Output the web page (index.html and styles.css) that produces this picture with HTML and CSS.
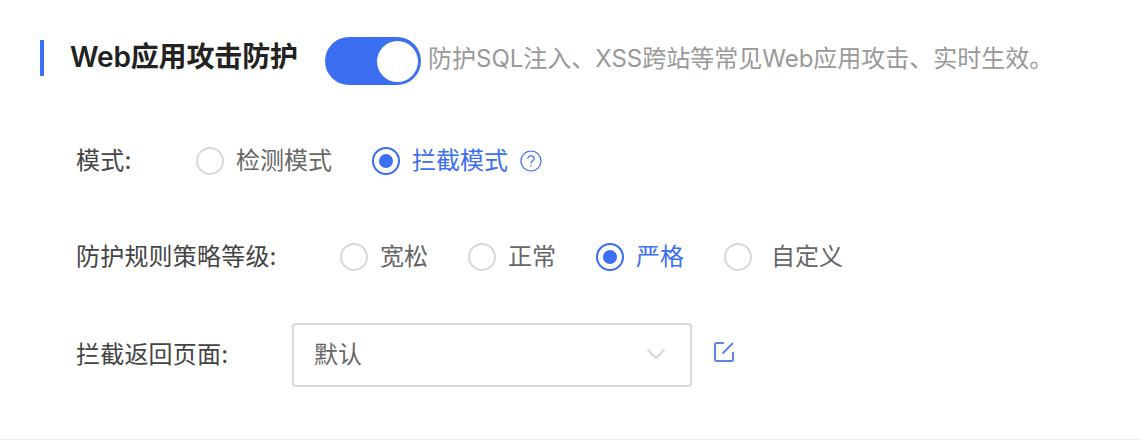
FILE: index.html
```html
<!DOCTYPE html>
<html lang="zh-CN">
<head>
<meta charset="utf-8">
<title>Web应用攻击防护</title>
<link rel="stylesheet" href="styles.css">
</head>
<body>
<section class="panel">
  <header class="head">
    <h2 class="title">Web应用攻击防护</h2>
    <span class="switch"><span class="knob"></span></span>
    <span class="desc">防护SQL注入、XSS跨站等常见Web应用攻击、实时生效。</span>
  </header>
  <div class="row row-mode">
    <span class="label label-mode">模式:</span>
    <span class="radio"><i class="dot"></i><span class="txt">检测模式</span></span>
    <span class="radio on"><i class="dot"></i><span class="txt">拦截模式</span></span>
    <svg class="help" width="22" height="22" viewBox="0 0 22 22" fill="none" stroke="#3b6ef0" stroke-width="1.2"><circle cx="11" cy="11" r="10"/><path d="M7.800 8.800c0-1.800 1.400-3 3.200-3s3.200 1.200 3.200 2.800c0 1.200-.7 1.800-1.700 2.500-1 .7-1.500 1.200-1.500 2.400"/><path d="M11 15v1.500"/></svg>
  </div>
  <div class="row row-level">
    <span class="label label-level">防护规则策略等级:</span>
    <span class="radio"><i class="dot"></i><span class="txt">宽松</span></span>
    <span class="radio"><i class="dot"></i><span class="txt">正常</span></span>
    <span class="radio on"><i class="dot"></i><span class="txt">严格</span></span>
    <span class="radio wide"><i class="dot"></i><span class="txt">自定义</span></span>
  </div>
  <div class="row row-page">
    <span class="label label-page">拦截返回页面:</span>
    <div class="select">
      <span class="txt">默认</span>
      <svg class="chev" width="20" height="12" viewBox="0 0 20 12" fill="none" stroke="#c4c4c4" stroke-width="1.3"><path d="M1.500 1.500 10 10l8.500-8.500"/></svg>
    </div>
    <svg class="edit" width="22" height="22" viewBox="0 0 22 22" fill="none" stroke="#5b84f1" stroke-width="2"><path d="M11 2H3.500A1.500 1.500 0 0 0 2 3.500V18.500A1.500 1.500 0 0 0 3.500 20H18.500A1.500 1.500 0 0 0 20 18.500V11"/><path d="M20 2 9.500 12.500"/></svg>
  </div>
</section>
</body>
</html>
```
FILE: styles.css
```css
* { box-sizing: border-box; }
html, body { margin: 0; padding: 0; background: #fff; }
body {
  width: 1142px;
  height: 440px;
  overflow: hidden;
  font-family: "Inter", "Noto Sans CJK SC", sans-serif;
  color: #555;
}
.panel {
  height: 440px;
  border-bottom: 1px solid #eee;
  padding-top: 37px;
}
.head {
  display: flex;
  align-items: center;
  height: 48px;
}
.title {
  margin: 0 0 6px 40px;
  padding-left: 26px;
  border-left: 4px solid #3b6ef0;
  height: 36px;
  line-height: 34px;
  font-size: 28px;
  font-weight: 600;
  letter-spacing: -0.15px;
  color: #222;
  width: 285px;
  white-space: nowrap;
}
.switch {
  width: 96px;
  height: 48px;
  border-radius: 24px;
  background: #3b6ef0;
  display: flex;
  align-items: center;
  justify-content: flex-end;
  padding-right: 3px;
}
.knob {
  width: 41px;
  height: 41px;
  border-radius: 50%;
  background: #fff;
}
.desc {
  margin: 0 0 10px 7px;
  font-size: 24px;
  color: #999;
  white-space: nowrap;
}
.row {
  display: flex;
  align-items: center;
  font-size: 24px;
  white-space: nowrap;
}
.row-mode { margin-top: 52px; height: 48px; }
.row-level { margin-top: 48px; height: 48px; }
.row-page { margin-top: 42px; height: 64px; }
.label { margin: 0 0 6px 76px; color: #444; letter-spacing: 0.2px; }
.label-mode { width: 120px; }
.label-level { width: 264px; }
.label-page { width: 216px; }
.txt { margin-bottom: 6px; }
.radio {
  display: inline-flex;
  align-items: center;
  gap: 12px;
  margin-right: 40px;
  color: #666;
}
.radio.wide { gap: 19px; }
.dot {
  width: 28px;
  height: 28px;
  border: 2px solid #d9d9d9;
  border-radius: 50%;
  background: #fff;
  position: relative;
}
.radio.on { color: #3b6ef0; }
.radio.on .dot { border-color: #3b6ef0; }
.radio.on .dot::after {
  content: "";
  position: absolute;
  inset: 5px;
  border-radius: 50%;
  background: #3b6ef0;
}
.row-mode .radio.on { margin-right: 12px; }
.help { margin-bottom: 1px; }
.select {
  width: 400px;
  height: 64px;
  border: 2px solid #d9d9d9;
  border-radius: 4px;
  display: flex;
  align-items: center;
  justify-content: space-between;
  padding: 0 24px 0 20px;
  color: #666;
}
.chev { margin-bottom: 2px; }
.edit { margin: 0 0 6px 21px; }
```
